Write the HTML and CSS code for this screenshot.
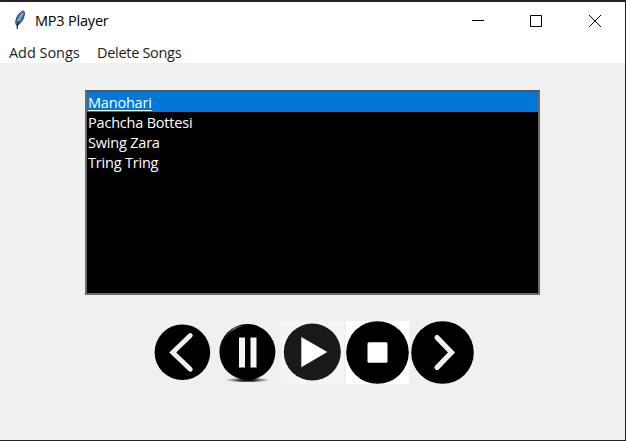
FILE: index.html
```html
<!DOCTYPE html>
<html lang="en">
<head>
<meta charset="utf-8">
<title>MP3 Player</title>
<link rel="stylesheet" href="styles.css">
</head>
<body>
<div class="window">
  <header class="titlebar">
    <svg class="feather" width="14" height="20" viewBox="0 0 14 20">
      <path d="M3.500 15.500C1.500 11 4 4.500 9.500 1C11.500 0.500 11.800 3 11 6C10 10.500 7.500 14 3.500 15.500Z" fill="#3d75b2" stroke="#353b44" stroke-width="1"/>
      <path d="M5 11L9.600 3" stroke="#7aaae0" stroke-width="2"/>
      <path d="M4.200 19L4.500 14.500L6 11.500" fill="none" stroke="#26292e" stroke-width="1.200"/>
    </svg>
    <h1 class="title">MP3 Player</h1>
    <div class="controls">
      <svg width="58" height="36" viewBox="0 0 58 36"><path d="M5 18.500H17" stroke="#000"/></svg>
      <svg width="58" height="36" viewBox="0 0 58 36"><path d="M5.500 13.500H16.500V24.500H5.500Z" fill="none" stroke="#000"/></svg>
      <svg width="42" height="36" viewBox="0 0 42 36"><path d="M6 13L18 25M18 13L6 25" stroke="#000"/></svg>
    </div>
  </header>
  <nav class="menu"><span class="add">Add Songs</span><span class="delete">Delete Songs</span></nav>
  <main class="content">
    <ul class="songs">
      <li class="selected"><span>Manohari</span></li>
      <li><span>Pachcha Bottesi</span></li>
      <li><span>Swing Zara</span></li>
      <li><span>Tring Tring</span></li>
    </ul>
    <div class="player">
      <svg viewBox="0 0 63 63"><circle cx="31.400" cy="31.300" r="27.800"/><path d="M39.300 14.500L21.700 31.500L39.300 48.300" fill="none" stroke="#f0f0f0" stroke-width="4.800" stroke-linecap="round"/></svg>
      <svg viewBox="0 0 63 63">
        <defs>
          <linearGradient id="shadow"><stop offset="0" stop-opacity="0"/><stop offset=".4" stop-opacity=".9"/><stop offset=".6" stop-opacity=".9"/><stop offset="1" stop-opacity="0"/></linearGradient>
          <linearGradient id="shine"><stop offset="0" stop-color="#555" stop-opacity="0"/><stop offset=".5" stop-color="#999"/><stop offset="1" stop-color="#555" stop-opacity="0"/></linearGradient>
        </defs>
        <ellipse cx="31.500" cy="59" rx="22" ry="1.800" fill="url(#shadow)"/>
        <circle cx="31.400" cy="31" r="28"/>
        <path d="M6 22A27 27 0 0 1 31 4.500" fill="none" stroke="url(#shine)" stroke-width="1.200"/>
        <path d="M23 16.500H29V46.500H23ZM34.500 16.500H40.500V46.500H34.500Z" fill="#f5f5f5"/>
      </svg>
      <svg class="play" viewBox="0 0 63 63"><circle cx="31.300" cy="31" r="28.500" fill="#191919"/><path d="M20.300 16L46.300 31L20.300 46.300Z" fill="#fff"/></svg>
      <svg class="stop" viewBox="0 0 63 63"><circle cx="31.500" cy="31.500" r="31.300"/><rect x="21.500" y="21.300" width="20" height="20.500" rx="1.500" fill="#fff"/></svg>
      <svg viewBox="0 0 63 63"><circle cx="31.500" cy="31.500" r="31.300"/><path d="M26 16.500L40.500 31.500L26 46.500" fill="none" stroke="#f0f0f0" stroke-width="5.200" stroke-linecap="round"/></svg>
    </div>
  </main>
</div>
</body>
</html>
```
FILE: styles.css
```css
* { box-sizing: border-box; }
body { margin: 0; font-family: "Open Sans", "Noto Sans", sans-serif; }
.window {
  width: 626px;
  height: 441px;
  border: solid #242222;
  border-width: 2px 1px 1px 0;
  background: #f0f0f0;
}
.titlebar { display: flex; height: 37px; background: #fff; }
.feather { margin: 8px 0 0 13px; }
.title {
  margin: 0 0 0 8px;
  font-size: 14.5px;
  font-weight: 400;
  line-height: 37px;
  letter-spacing: -0.2px;
  color: #000;
}
.controls { display: flex; margin-left: auto; }
.menu {
  display: flex;
  gap: 17px;
  height: 24px;
  padding-left: 9px;
  background: #fff;
  font-size: 14.5px;
  line-height: 27px;
  letter-spacing: -0.3px;
  color: #1c1c1c;
  white-space: nowrap;
}
.add { width: 71px; letter-spacing: -0.05px; }
.content { padding-top: 27px; }
.songs {
  width: 455px;
  height: 205px;
  margin: 0 0 0 85px;
  padding: 0;
  border: 2px solid #6b6b6b;
  border-top-color: #555;
  background: #000;
  color: #fff;
  list-style: none;
  font-size: 14.5px;
  line-height: 21px;
  letter-spacing: -0.2px;
}
.songs li { height: 20px; padding-left: 1px; }
.songs .selected { background: #0078d7; }
.selected span { text-decoration: underline; text-underline-offset: 2px; }
.player { display: flex; gap: 2px; margin: 26px 0 0 151px; }
.player svg { width: 63px; height: 63px; }
.play { background: #f5f5f5; }
.stop { background: #fff; }
```
